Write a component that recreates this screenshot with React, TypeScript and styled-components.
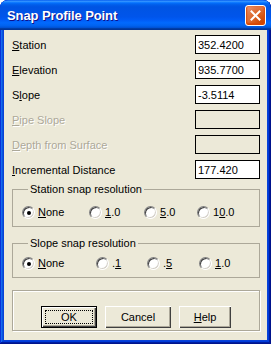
import React from 'react';
import styled, {createGlobalStyle} from 'styled-components';

const beige = '#ece9d8';
const etch = '#aca899';

const GlobalStyle = createGlobalStyle`
  html, body {
    margin: 0;
    padding: 0;
    background: #ffffff;
  }
  body {
    font-family: "Liberation Sans", Arial, sans-serif;
    font-size: 11px;
  }
`

const Window = styled.div`
  width: 271px;
  height: 344px;
  box-sizing: border-box;
  display: flex;
  flex-direction: column;
  background: #0842d8;
  border-radius: 8px 8px 0 0;
  box-shadow: inset -1px -1px #00138c, inset 1px 1px #0831d9,
    inset -2px -2px #001ea0, inset 2px 2px #166aee,
    inset -3px -3px #003bda, inset 3px 3px #0855dd;
  overflow: hidden;
`

const TitleBar = styled.div`
  height: 30px;
  flex: none;
  display: flex;
  align-items: center;
  justify-content: space-between;
  padding: 0 5px 0 7px;
  border-radius: 8px 8px 0 0;
  background: linear-gradient(to bottom, #0058ee 0%, #3593ff 4%, #288eff 6%, #127dff 8%,
    #036ffc 10%, #0262ee 14%, #0057e5 20%, #0054e3 24%, #0055eb 56%, #005bf5 66%,
    #026afe 76%, #0062ef 86%, #0052d6 92%, #0040ab 94%, #003092 100%);
`

const Title = styled.span`
  color: #fff;
  font-weight: bold;
  font-size: 13px;
  letter-spacing: -0.1px;
  text-shadow: 1px 1px #0f1089;
`

const CloseButton = styled.div`
  width: 21px;
  height: 21px;
  box-sizing: border-box;
  border: 1px solid #fff;
  border-radius: 3px;
  display: flex;
  align-items: center;
  justify-content: center;
  background: radial-gradient(circle at 85% 85%, #cc4600 0%, #dc6527 45%, #e27c4c 70%, #eda185 100%);
  box-shadow: inset 0 -1px 2px 1px #da4600;
`

const Body = styled.div`
  flex: 1;
  margin: 0 4px 4px;
  background: ${beige};
  padding: 5px 7px 0 8px;
  display: flex;
  flex-direction: column;
`

const Fields = styled.div`
  display: flex;
  flex-direction: column;
  gap: 6px;
`

const Row = styled.div`
  height: 19px;
  display: flex;
  align-items: center;
  justify-content: space-between;
`

const Label = styled.span<{ $disabled?: boolean }>`
  color: ${p => p.$disabled ? etch : '#000'};
  text-shadow: ${p => p.$disabled ? '1px 1px #fff' : 'none'};
`

const Key = styled.span`
  text-decoration: underline;
`

const Edit = styled.input`
  width: 65px;
  height: 19px;
  box-sizing: border-box;
  margin: 0;
  border: 1px solid #000;
  padding: 0 2px;
  font-family: "Liberation Sans", Arial, sans-serif;
  font-size: 11px;
  color: #000;
  background: #fff;
  outline: none;

  &:disabled {
    background: ${beige};
  }
`

const Group = styled.fieldset<{ $top: number; $padTop: number }>`
  margin: ${p => p.$top}px 0 0;
  padding: ${p => p.$padTop}px 0 7px 9px;
  border: 1px solid ${etch};
  min-width: 0;
`

const Legend = styled.legend`
  margin-left: 6px;
  padding: 0 2px;
  line-height: 14px;
  color: #000;
`

const RadioRow = styled.div<{ $cols: string }>`
  display: grid;
  grid-template-columns: ${p => p.$cols};
  height: 13px;
  align-items: center;
`

const RadioItem = styled.label`
  display: flex;
  align-items: center;
  gap: 3px;
  line-height: 13px;
`

const RadioCircle = styled.span<{ $checked?: boolean }>`
  width: 13px;
  height: 13px;
  box-sizing: border-box;
  border-radius: 50%;
  border: 1px solid;
  border-color: #808080 #fff #fff #808080;
  background: #fff;
  box-shadow: inset 1px 1px #404040, inset -1px -1px #d4d0c8;
  display: flex;
  align-items: center;
  justify-content: center;

  &::after {
    content: '';
    width: 4px;
    height: 4px;
    border-radius: 50%;
    background: ${p => p.$checked ? '#000' : 'transparent'};
  }
`

const ButtonPanel = styled.div`
  margin-top: 12px;
  border: 1px solid ${etch};
  box-shadow: inset 1px 1px #fff, 1px 1px #fff;
  padding: 15px 0 2px 0;
  display: flex;
  justify-content: center;
  gap: 8px;
`

const Button = styled.button<{ $w: number; $default?: boolean }>`
  width: ${p => p.$w}px;
  height: 22px;
  box-sizing: border-box;
  margin: 0;
  padding: 0;
  font-family: "Liberation Sans", Arial, sans-serif;
  font-size: 11px;
  color: #000;
  background: ${beige};
  border: ${p => p.$default ? '1px solid #000' : 'none'};
  box-shadow: ${p => p.$default
    ? 'inset 1px 1px #fff, inset -1px -1px #404040, inset -2px -2px #aca899'
    : 'inset 1px 1px #fff, inset -1px -1px #404040, inset -2px -2px #aca899'};
  position: relative;
  display: flex;
  align-items: center;
  justify-content: center;
`

const FocusRing = styled.span`
  position: absolute;
  inset: 3px;
  border: 1px dotted #000;
`

const fields = [
    {label: <><Key>S</Key>tation</>, value: '352.4200'},
    {label: <><Key>E</Key>levation</>, value: '935.7700'},
    {label: <>S<Key>l</Key>ope</>, value: '-3.5114'},
    {label: <><Key>P</Key>ipe Slope</>, value: '', disabled: true},
    {label: <><Key>D</Key>epth from Surface</>, value: '', disabled: true},
    {label: <><Key>I</Key>ncremental Distance</>, value: '177.420'},
]

const stationOptions = [
    <><Key>N</Key>one</>,
    <><Key>1</Key>.0</>,
    <><Key>5</Key>.0</>,
    <>1<Key>0</Key>.0</>,
]

const slopeOptions = [
    <><Key>N</Key>one</>,
    <>.<Key>1</Key></>,
    <>.<Key>5</Key></>,
    <><Key>1</Key>.0</>,
]

const RadioGroup = ({title, options, cols, top, padTop}: {
    title: string, options: React.ReactNode[], cols: string, top: number, padTop: number
}) => (
    <Group $top={top} $padTop={padTop}>
        <Legend>{title}</Legend>
        <RadioRow $cols={cols}>
            {options.map((o, i) => (
                <RadioItem key={i}>
                    <RadioCircle $checked={i === 0}/>
                    <span>{o}</span>
                </RadioItem>
            ))}
        </RadioRow>
    </Group>
)

export default function App() {
    return (
        <>
            <GlobalStyle/>
            <Window>
                <TitleBar>
                    <Title>Snap Profile Point</Title>
                    <CloseButton>
                        <svg width="11" height="11" viewBox="0 0 11 11">
                            <path d="M1.5 1.5 L9.5 9.5 M9.5 1.5 L1.5 9.5" stroke="#fff" strokeWidth="2" strokeLinecap="square"/>
                        </svg>
                    </CloseButton>
                </TitleBar>
                <Body>
                    <Fields>
                        {fields.map((f, i) => (
                            <Row key={i}>
                                <Label $disabled={f.disabled}>{f.label}</Label>
                                <Edit readOnly disabled={f.disabled} value={f.value}/>
                            </Row>
                        ))}
                    </Fields>
                    <RadioGroup title="Station snap resolution" options={stationOptions}
                                cols="67px 55px 53px auto" top={3} padTop={10}/>
                    <RadioGroup title="Slope snap resolution" options={slopeOptions}
                                cols="74px 51px 52px auto" top={9} padTop={7}/>
                    <ButtonPanel>
                        <Button $w={56} $default>
                            <FocusRing/>
                            OK
                        </Button>
                        <Button $w={66}>Cancel</Button>
                        <Button $w={52}><span><Key>H</Key>elp</span></Button>
                    </ButtonPanel>
                </Body>
            </Window>
        </>
    );
}
